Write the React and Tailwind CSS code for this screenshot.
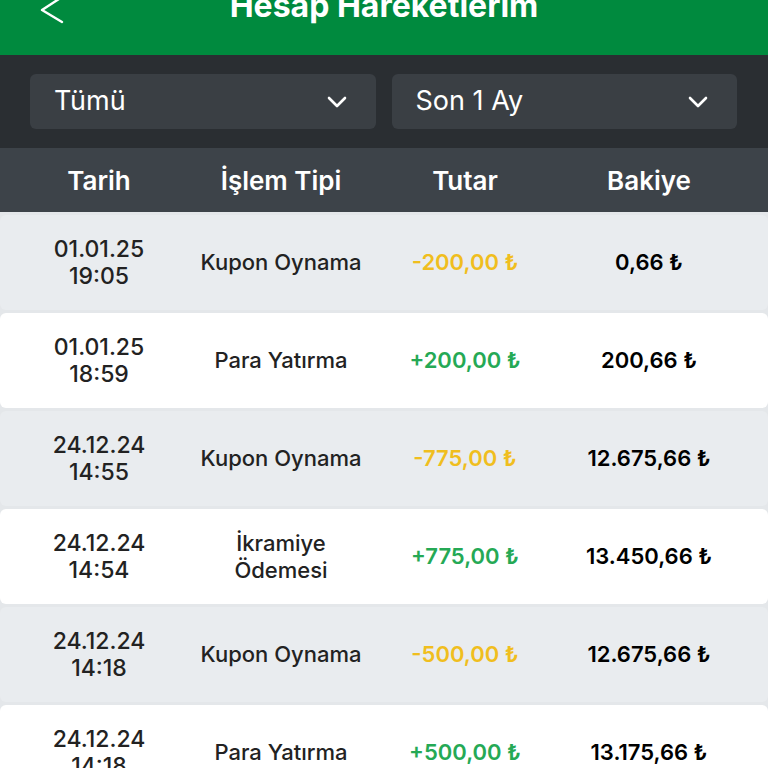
const rows = [
  { date: "01.01.25", time: "19:05", type: ["Kupon Oynama"], amount: "-200,00 ₺", positive: false, balance: "0,66 ₺" },
  { date: "01.01.25", time: "18:59", type: ["Para Yatırma"], amount: "+200,00 ₺", positive: true, balance: "200,66 ₺" },
  { date: "24.12.24", time: "14:55", type: ["Kupon Oynama"], amount: "-775,00 ₺", positive: false, balance: "12.675,66 ₺" },
  { date: "24.12.24", time: "14:54", type: ["İkramiye", "Ödemesi"], amount: "+775,00 ₺", positive: true, balance: "13.450,66 ₺" },
  { date: "24.12.24", time: "14:18", type: ["Kupon Oynama"], amount: "-500,00 ₺", positive: false, balance: "12.675,66 ₺" },
  { date: "24.12.24", time: "14:18", type: ["Para Yatırma"], amount: "+500,00 ₺", positive: true, balance: "13.175,66 ₺" },
];

function Chevron() {
  return (
    <svg width="20" height="12" viewBox="0 0 20 12" fill="none">
      <path d="M2 2l8 8 8-8" stroke="white" strokeWidth="2.6" strokeLinecap="round" strokeLinejoin="round" />
    </svg>
  );
}

function Select({ label }) {
  return (
    <div className="flex-1 h-[55px] rounded-md bg-[#3a3f44] flex items-center justify-between pl-6 pr-[29px]">
      <span className="text-white text-[27px]">{label}</span>
      <Chevron />
    </div>
  );
}

export default function App() {
  return (
    <div className="w-[768px] h-[768px] overflow-hidden bg-[#e4e7ea] font-['Inter','DejaVu_Sans',sans-serif]">
      {/* Header */}
      <div className="h-[55px] bg-[#008a3e] relative flex justify-center">
        <svg className="absolute left-[38px] top-[-4px]" width="28" height="30" viewBox="0 0 28 30" fill="none">
          <path d="M24 1L4 14l20 12" stroke="white" strokeWidth="2.4" strokeLinecap="round" strokeLinejoin="round" />
        </svg>
        <h1 className="text-white font-bold text-[32px] leading-none -mt-[10px]">Hesap Hareketlerim</h1>
      </div>

      {/* Filters */}
      <div className="h-[93px] bg-[#2a2e32] flex gap-4 pl-[30px] pr-[31px] pt-[19px]">
        <Select label="Tümü" />
        <Select label="Son 1 Ay" />
      </div>

      {/* Table header */}
      <div className="h-[67px] bg-[#3d4349] flex items-center text-white font-semibold text-[26px] border-b-[3px] border-[#e4e7ea]">
        <div className="w-[198px] text-center">Tarih</div>
        <div className="w-[166px] text-center">İşlem Tipi</div>
        <div className="w-[202px] text-center">Tutar</div>
        <div className="w-[166px] text-center">Bakiye</div>
      </div>

      {/* Rows */}
      <div className="flex flex-col gap-[3px]">
        {rows.map((r, i) => (
          <div
            key={i}
            className={`h-[95px] rounded-md flex items-center ${i % 2 === 0 ? "bg-[#e9ecef]" : "bg-white"}`}
          >
            <div className="w-[198px] text-center text-[23px] leading-[27px] font-medium text-[#222]">
              <div>{r.date}</div>
              <div>{r.time}</div>
            </div>
            <div className="w-[166px] text-center text-[22px] leading-[27px] font-medium text-[#222]">
              {r.type.map((t) => (
                <div key={t}>{t}</div>
              ))}
            </div>
            <div
              className={`w-[202px] text-center text-[22px] font-semibold ${r.positive ? "text-[#25a955]" : "text-[#f0be1e]"}`}
            >
              {r.amount}
            </div>
            <div className="w-[166px] text-center text-[22px] font-semibold text-black">{r.balance}</div>
          </div>
        ))}
      </div>
    </div>
  );
}
